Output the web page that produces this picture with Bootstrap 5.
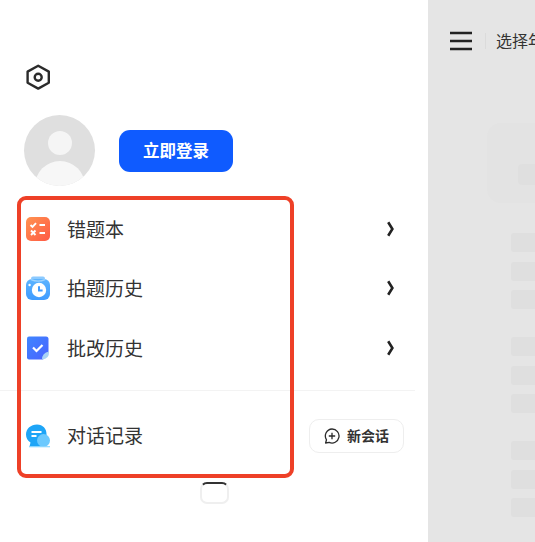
<!DOCTYPE html>
<html lang="zh">
<head>
    <meta charset="UTF-8">
    <meta name="viewport" content="width=device-width, initial-scale=1.0">
    <title>我的</title>
    <link rel="stylesheet" href="https://cdn.jsdelivr.net/npm/bootstrap@5.3.0/dist/css/bootstrap.min.css">
    <style>
        html, body { height: 542px; overflow: hidden; background: #fff; }
        body { font-family: "Noto Sans CJK SC", "Liberation Sans", sans-serif; color: #333; }
        .shell { height: 542px; position: relative; }

        .side { width: 428px; flex: none; padding-top: 64px; }
        .gear-wrap { padding-left: 25px; height: 26px; }
        .profile { margin-top: 25px; padding-left: 24px; gap: 24px; }
        .face { width: 71px; height: 71px; border-radius: 50%; background: #dfdfdf; position: relative; overflow: hidden; }
        .face-head { width: 24px; height: 24px; border-radius: 50%; background: #f5f5f5; margin: 16px auto 0; }
        .face-body { width: 50px; height: 50px; border-radius: 50%; background: #f7f7f7; margin: 6px auto 0; }
        .login-btn { width: 114px; height: 42px; background: #0f5bff; border: 0; border-radius: 11px; color: #fff; font-size: 16.5px; font-weight: 700; padding: 0; }
        .login-btn:hover { background: #0f5bff; color: #fff; }

        .menu-box { margin-top: 13px; padding: 0 26px; }
        .menu-row { height: 59.5px; font-size: 19px; color: #333; gap: 17px; padding-right: 8px; }
        .menu-ico { width: 24px; height: 24px; flex: none; display: block; }
        .divide { height: 1px; background: #f3f3f3; width: 415px; margin-top: 12px; }
        .chat-row { margin-top: 15px; height: 60px; padding: 0 24px 0 26px; font-size: 19px; gap: 17px; }
        .new-chat { width: 95px; height: 34px; border: 1px solid #eeeeee; border-radius: 10px; background: #fff; font-size: 14px; font-weight: 700; color: #333; gap: 7px; padding: 0; }
        .grip { width: 29px; height: 22px; margin: 16px 0 0 200px; border: 2px solid #efefef; border-top: 2px solid #333; border-radius: 7px; }

        .main-gray { flex: 1; min-width: 0; background: #e5e5e5; overflow: hidden; padding-top: 31px; }
        .top-line { height: 20px; padding-left: 22px; white-space: nowrap; }
        .burger { width: 22px; height: 20px; flex: none; display: block; }
        .top-sep { width: 1px; height: 16px; background: #dbdbdb; margin: 0 10px 0 13px; flex: none; }
        .top-text { font-size: 16px; color: #333; line-height: 20px; margin-top: -2px; }
        .ghost-card { margin: 72px 0 0 59px; height: 80px; background: #e3e3e3; border-radius: 14px 0 0 14px; padding: 41px 0 0 31px; }
        .ghost-inner { height: 21px; background: #dfdfdf; border-radius: 4px 0 0 4px; }
        .ghost-list { margin: 30px 0 0 83px; gap: 28px; }
        .ghost-group { gap: 9.5px; }
        .ghost-bar { height: 19px; background: #dfdfdf; border-radius: 3px 0 0 3px; }

        .red-mark { position: absolute; left: 17px; top: 196px; width: 277px; height: 282px; border: 4px solid #ee4027; border-radius: 9px; pointer-events: none; }
    </style>
</head>
<body>
    <div class="shell d-flex">
        <div class="side">
            <div class="gear-wrap">
                <svg width="26" height="26" viewBox="0 0 26 26" fill="none" stroke="#2b2b2b" class="d-block">
                    <path d="M13.200 1.800 23.800 7.600V18.800L13.200 24.600 2.600 18.800V7.600Z" stroke-width="2.400" stroke-linejoin="round"/>
                    <circle cx="13.200" cy="13.200" r="3.500" stroke-width="2.400"/>
                </svg>
            </div>

            <div class="profile d-flex align-items-center">
                <div class="face">
                    <div class="face-head"></div>
                    <div class="face-body"></div>
                </div>
                <button class="btn login-btn">立即登录</button>
            </div>

            <div class="menu-box">
                <div class="menu-row d-flex align-items-center">
                    <svg class="menu-ico" viewBox="0 0 24 24">
                        <defs><linearGradient id="gOrange" x1="0" y1="0" x2="1" y2="1"><stop offset="0" stop-color="#ff9350"/><stop offset="1" stop-color="#ff5a45"/></linearGradient></defs>
                        <rect width="24" height="24" rx="5" fill="url(#gOrange)"/>
                        <path d="M4.500 8 6.500 10 10 6.200M13.500 8H19M13.500 16H19M5 13.500 9.500 18M9.500 13.500 5 18" fill="none" stroke="#fff" stroke-width="1.900"/>
                    </svg>
                    <span class="flex-grow-1">错题本</span>
                    <svg width="7" height="16" viewBox="0 0 7 16" fill="none" stroke="#222" stroke-width="2.600"><path d="M1.200 1.200 5.400 8 1.200 14.800"/></svg>
                </div>
                <div class="menu-row d-flex align-items-center">
                    <svg class="menu-ico" viewBox="0 0 24 24">
                        <defs><linearGradient id="gBlue" x1="0" y1="0" x2="0" y2="1"><stop offset="0" stop-color="#5cb4ff"/><stop offset="1" stop-color="#3f9bff"/></linearGradient></defs>
                        <path d="M5 2.500Q5 0.500 7 0.500H17Q19 0.500 19 2.500V5H5Z" fill="#8ccaff"/>
                        <rect y="3" width="24" height="21" rx="6" fill="url(#gBlue)"/>
                        <path d="M5 3.600Q12 6.600 19 3.600" fill="none" stroke="#9ed3ff" stroke-width="1.200"/>
                        <circle cx="13" cy="14" r="7.200" fill="#fff"/>
                        <path d="M13 10.200V14.600H16.600" fill="none" stroke="#3f9bff" stroke-width="2"/>
                        <circle cx="3.600" cy="9" r="1.200" fill="#fff"/>
                    </svg>
                    <span class="flex-grow-1">拍题历史</span>
                    <svg width="7" height="16" viewBox="0 0 7 16" fill="none" stroke="#222" stroke-width="2.600"><path d="M1.200 1.200 5.400 8 1.200 14.800"/></svg>
                </div>
                <div class="menu-row d-flex align-items-center">
                    <svg class="menu-ico" viewBox="0 0 24 24">
                        <defs><linearGradient id="gIndigo" x1="0" y1="0" x2="1" y2="1"><stop offset="0" stop-color="#3f86ff"/><stop offset="1" stop-color="#4a62ff"/></linearGradient></defs>
                        <path d="M3 0.500H20Q22.500 0.500 22.500 3V17L17 23.500H3Q1 23.500 1 21.500V2.500Q1 0.500 3 0.500Z" fill="url(#gIndigo)"/>
                        <path d="M7 11.500 10.500 15 16.500 9" fill="none" stroke="#fff" stroke-width="2.200"/>
                        <path d="M16 23.500Q16 17 23 15.500 23.500 23 16 23.500Z" fill="#a9d3f5"/>
                    </svg>
                    <span class="flex-grow-1">批改历史</span>
                    <svg width="7" height="16" viewBox="0 0 7 16" fill="none" stroke="#222" stroke-width="2.600"><path d="M1.200 1.200 5.400 8 1.200 14.800"/></svg>
                </div>
            </div>

            <div class="divide"></div>

            <div class="chat-row d-flex align-items-center">
                <svg class="menu-ico" viewBox="0 0 24 24">
                    <path d="M11 0.500C4.900 0.500 0 4.800 0 10.500c0 3.600 1.800 6.300 4.500 8L3.500 22.500h11l6-3V10C20.500 4.800 17 .5 11 .5Z" fill="#1ea5f7"/>
                    <path d="M5.500 8H15.500M5.500 12H10.500" fill="none" stroke="#fff" stroke-width="1.800"/>
                    <circle cx="17.500" cy="16.500" r="6.500" fill="#6cc9fe"/>
                    <path d="M3 22.700H24" stroke="#8cd6ff" stroke-width="1.200"/>
                </svg>
                <span class="flex-grow-1">对话记录</span>
                <button class="btn new-chat d-flex align-items-center justify-content-center">
                    <svg width="16" height="16" viewBox="0 0 16 16" fill="none" stroke="#2b2b2b" stroke-width="1.300">
                        <path d="M8 1a7 7 0 1 1-2.800 13.400L1.600 15l.9-3.200A7 7 0 0 1 8 1Z" stroke-linejoin="round"/>
                        <path d="M8 4.800v6.400M4.800 8h6.400"/>
                    </svg>
                    <span>新会话</span>
                </button>
            </div>

            <div class="grip"></div>
        </div>

        <div class="main-gray">
            <div class="top-line d-flex align-items-center">
                <svg class="burger" viewBox="0 0 22 20" fill="none" stroke="#222" stroke-width="2.700"><path d="M0 2H22M0 10H22M0 18H22"/></svg>
                <div class="top-sep"></div>
                <span class="top-text">选择年级</span>
            </div>

            <div class="ghost-card">
                <div class="ghost-inner"></div>
            </div>

            <div class="ghost-list d-flex flex-column">
                <div class="ghost-group d-flex flex-column">
                    <div class="ghost-bar"></div>
                    <div class="ghost-bar"></div>
                    <div class="ghost-bar"></div>
                </div>
                <div class="ghost-group d-flex flex-column">
                    <div class="ghost-bar"></div>
                    <div class="ghost-bar"></div>
                    <div class="ghost-bar"></div>
                </div>
                <div class="ghost-group d-flex flex-column">
                    <div class="ghost-bar"></div>
                    <div class="ghost-bar"></div>
                    <div class="ghost-bar"></div>
                </div>
            </div>
        </div>

        <div class="red-mark"></div>
    </div>

    <script src="https://cdn.jsdelivr.net/npm/bootstrap@5.3.0/dist/js/bootstrap.bundle.min.js"></script>
</body>
</html>
